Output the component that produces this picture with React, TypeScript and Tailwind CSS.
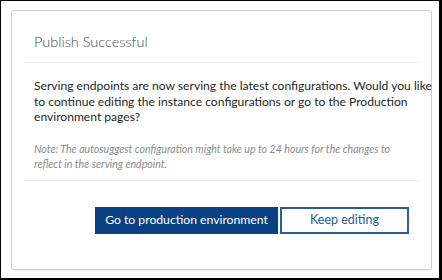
export default function App() {
  return (
    <div className="w-[442px] h-[280px] bg-white border-t border-l border-r-[3px] border-b-2 border-black pl-[10px] pt-[9px]">
      <div
        className="w-[421px] h-[260px] rounded-[3px] border border-[#cfcfcf] bg-white shadow-[0_1px_2px_rgba(0,0,0,0.08)]"
        style={{ fontFamily: 'Lato, "Open Sans", sans-serif' }}
      >
        <div className="px-[22px] pt-[19px] pb-[8px]">
          <h1 className="text-[14.5px] leading-[24px] font-light text-[#4a4a4a]">Publish Successful</h1>
        </div>
        <div className="mx-[11px] h-px bg-[#ececec]" />
        <div className="px-[22px] pt-[15px]">
          <p className="whitespace-nowrap text-[12.1px] leading-[15.5px] text-[#1f1f1f]">
            Serving endpoints are now serving the latest configurations. Would you like
            <br />
            to continue editing the instance configurations or go to the Production
            <br />
            environment pages?
          </p>
          <p className="mt-[17px] whitespace-nowrap text-[10.6px] leading-[15px] italic text-[#8a8a8a]">
            Note: The autosuggest configuration might take up to 24 hours for the changes to
            <br />
            reflect in the serving endpoint.
          </p>
        </div>
        <div className="mx-[11px] mt-[8px] h-px bg-[#ececec]" />
        <div className="flex justify-end gap-[2px] pr-[22px] pt-[26px]">
          <button className="w-[183px] h-[27px] bg-[#0a4182] text-white text-[12.2px]">
            Go to production environment
          </button>
          <button className="w-[129px] h-[27px] border-2 border-[#2a5d9e] bg-white text-[#1e5aa0] text-[12.5px]">
            Keep editing
          </button>
        </div>
      </div>
    </div>
  );
}
